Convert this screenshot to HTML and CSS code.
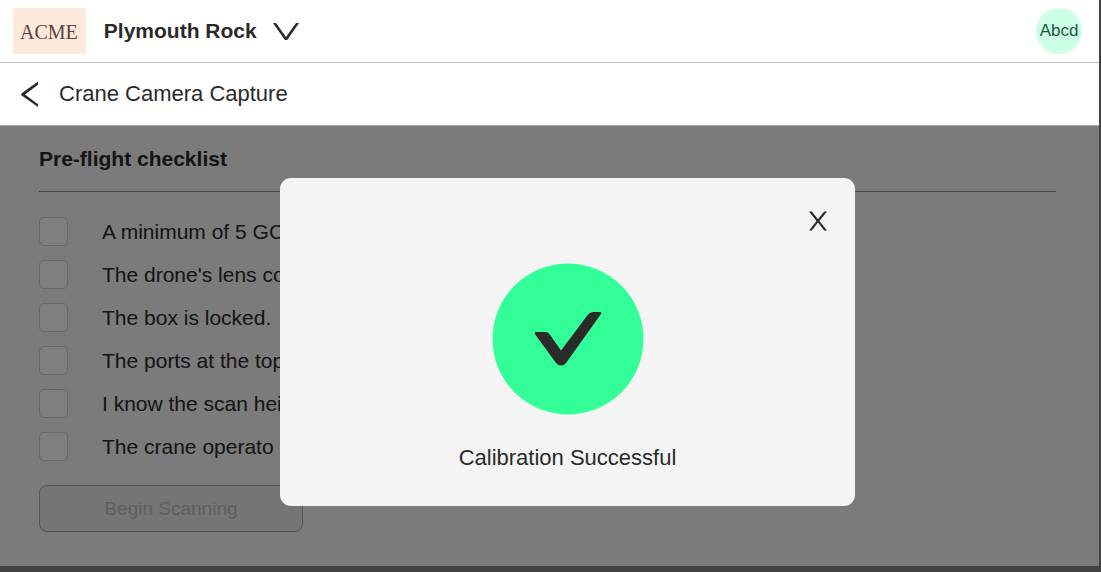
FILE: index.html
```html
<!DOCTYPE html>
<html lang="en">
<head>
<meta charset="utf-8">
<meta name="viewport" content="width=device-width, initial-scale=1">
<title>Crane Camera Capture</title>
<link rel="stylesheet" href="styles.css">
</head>
<body>
<div class="app">
  <header class="topbar">
    <span class="logo">ACME</span>
    <button class="site-picker" type="button">
      <span>Plymouth Rock</span>
      <svg class="chevron" width="26" height="20" viewBox="0 0 26 20" aria-hidden="true"><path d="M0 2H3L13 16L23 2H26L14.200 19H11.800Z"/></svg>
    </button>
    <button class="avatar" type="button">Abcd</button>
  </header>
  <nav class="subbar">
    <button class="back" type="button" aria-label="Back">
      <svg width="18" height="26" viewBox="0 0 18 26" aria-hidden="true"><path d="M17 0.500V3.700L4 13.500L17 23.300V26L0.300 14.300V12.600Z"/></svg>
    </button>
    <h1 class="page-title">Crane Camera Capture</h1>
  </nav>
  <main class="content">
    <h2 class="section-title">Pre-flight checklist</h2>
    <div class="checklist">
      <label class="item"><input class="box" type="checkbox"><span>A minimum of 5 GC</span></label>
      <label class="item"><input class="box" type="checkbox"><span>The drone's lens co</span></label>
      <label class="item"><input class="box" type="checkbox"><span>The box is locked.</span></label>
      <label class="item"><input class="box" type="checkbox"><span>The ports at the top</span></label>
      <label class="item"><input class="box" type="checkbox"><span>I know the scan hei</span></label>
      <label class="item"><input class="box" type="checkbox"><span>The crane operato</span></label>
    </div>
    <button class="begin" type="button" disabled>Begin Scanning</button>
    <div class="backdrop">
      <section class="dialog" role="dialog" aria-modal="true" aria-labelledby="dialog-message">
        <button class="close" type="button" aria-label="Close">
          <svg width="18" height="20" viewBox="0 0 18 20" aria-hidden="true"><path d="M0 0.500H2.800L9 8.300L15.200 0.500H18L10.400 9.900L18 19.500H15.200L9 11.600L2.800 19.500H0L7.600 9.900Z"/></svg>
        </button>
        <svg class="success" width="152" height="152" viewBox="0 0 152 152" aria-hidden="true">
          <circle cx="76" cy="76" r="75.500" fill="#33ff99"/>
          <path fill="#2a2a2a" d="M44 69H53.500Q56 69 57.500 71L69 87.500L96 51.500Q98 49 101 49H108Q110 49 109 51L74 100Q72 102.500 69 102.500Q66 102.500 64 100L43.200 71.500Q42 69 44 69Z"/>
        </svg>
        <p class="message" id="dialog-message">Calibration Successful</p>
      </section>
    </div>
  </main>
</div>
</body>
</html>
```
FILE: styles.css
```css
* {
  box-sizing: border-box;
}

body {
  margin: 0;
  background: #424242;
  color: #2a2a2a;
  font-family: "Liberation Sans", Arial, sans-serif;
  font-size: 22px;
  line-height: 28px;
}

button {
  padding: 0;
  border: 0;
  background: none;
  color: inherit;
  font: inherit;
}

svg {
  display: block;
  fill: #2a2a2a;
}

.app {
  display: flex;
  flex-direction: column;
  min-height: 100vh;
  padding: 0 2px 6px 0;
}

.topbar {
  display: flex;
  align-items: center;
  padding: 8px 17px 8px 13px;
  border-bottom: 1px solid #b8b8b8;
  background: #fff;
}

.logo {
  padding: 10px 8px 8px 7px;
  border-radius: 2px;
  background: #fde9dc;
  color: #594345;
  font-family: "Liberation Serif", "Times New Roman", serif;
  font-size: 20px;
}

.site-picker {
  display: flex;
  align-items: center;
  gap: 16px;
  margin-left: 18px;
  font-size: 21px;
  font-weight: bold;
}

.avatar {
  width: 46px;
  height: 46px;
  margin-left: auto;
  border-radius: 50%;
  background: #ccffe5;
  color: #1c5b3c;
  font-size: 17px;
}

.subbar {
  display: flex;
  align-items: center;
  gap: 20px;
  padding: 17px 21px;
  border-bottom: 1px solid #aaa;
  background: #fff;
}

.page-title {
  margin: 0;
  font-size: 22px;
  font-weight: normal;
}

.content {
  position: relative;
  flex: 1;
  padding: 19px 43px 34px 39px;
  background: #f6f6f6;
}

.section-title {
  margin: 0;
  padding-bottom: 18px;
  border-bottom: 1px solid #8c8c8c;
  font-size: 21px;
}

.checklist {
  display: grid;
  gap: 14px;
  padding: 25px 0 24px;
  font-size: 21px;
}

.item {
  display: flex;
  align-items: center;
  gap: 34px;
}

.box {
  appearance: none;
  width: 29px;
  height: 29px;
  margin: 0;
  border: 1px solid #d0d0d0;
  border-radius: 5px;
  background: #fff;
}

.begin {
  width: 264px;
  height: 47px;
  border: 1px solid #aaa;
  border-radius: 8px;
  background: #eaeaea;
  color: #bcbcbc;
  font-size: 19px;
}

.backdrop {
  position: absolute;
  inset: 0;
  display: flex;
  align-items: center;
  justify-content: center;
  padding: 0 0 8px 36px;
  background: rgba(0, 0, 0, 0.5);
}

.dialog {
  display: flex;
  flex-direction: column;
  align-items: center;
  width: 575px;
  max-width: 90%;
  padding: 33px 28px 34px;
  border-radius: 11px;
  background: #f4f4f4;
}

.close {
  align-self: flex-end;
  margin-bottom: 32px;
}

.message {
  margin: 29px 0 0;
}
```
